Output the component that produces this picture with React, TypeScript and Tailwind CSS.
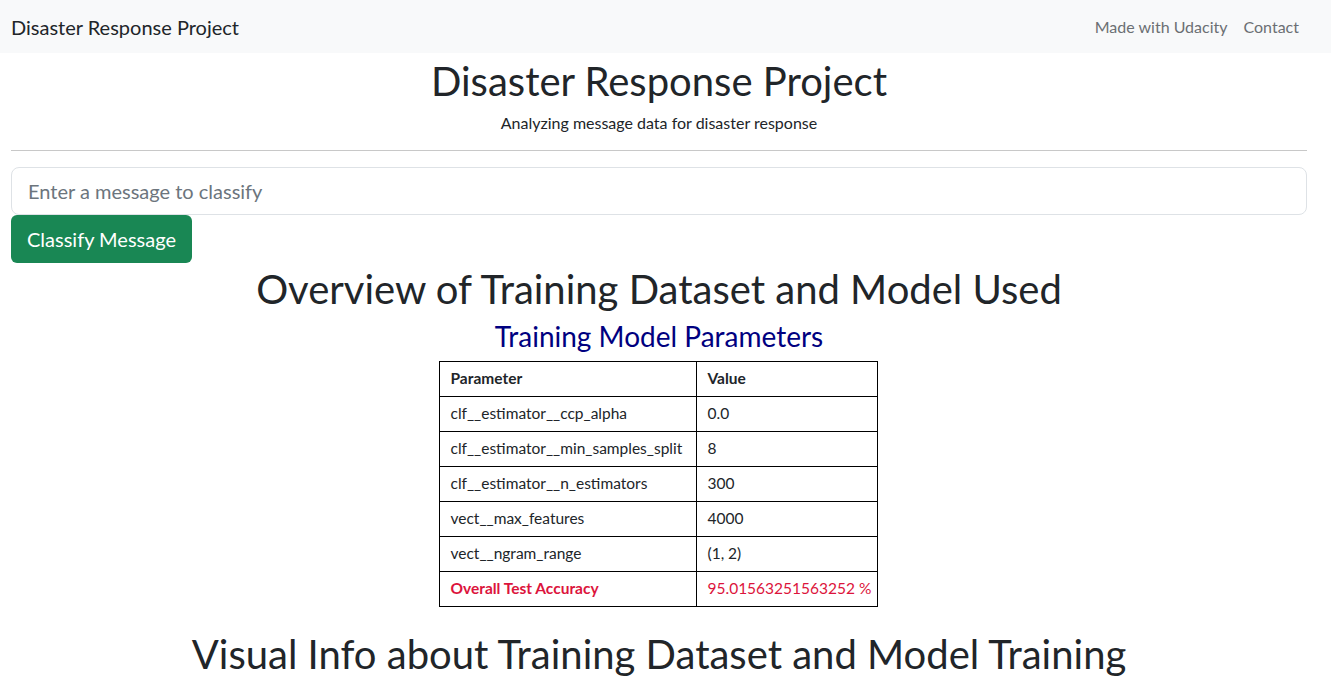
import React from "react";

const rows: [string, string][] = [
  ["clf__estimator__ccp_alpha", "0.0"],
  ["clf__estimator__min_samples_split", "8"],
  ["clf__estimator__n_estimators", "300"],
  ["vect__max_features", "4000"],
  ["vect__ngram_range", "(1, 2)"],
];

export default function App() {
  return (
    <div className="min-h-screen bg-white text-[#212529] font-['Lato','Noto_Sans',sans-serif]">
      {/* Navbar */}
      <nav className="h-[53px] bg-[#f8f9fa] flex items-center justify-between pl-[11px] pr-[32px]">
        <span className="text-[20px]">Disaster Response Project</span>
        <div className="flex items-center gap-[16px] text-[16px] text-[#6b6f73]">
          <span>Made with Udacity</span>
          <span>Contact</span>
        </div>
      </nav>

      <div className="ml-[11px] mr-[24px]">
        {/* Jumbotron */}
        <div className="text-center pt-[4px]">
          <h1 className="text-[40px] leading-[48px]">Disaster Response Project</h1>
          <p className="text-[16px] leading-[24px] mt-[6px]">Analyzing message data for disaster response</p>
        </div>
        <hr className="mt-[15px] border-t border-[#c8c8c8]" />

        {/* Form */}
        <div className="mt-[16px]">
          <input
            className="w-full h-[48px] px-[16px] text-[20px] border border-[#dee2e6] rounded-[8px] placeholder:text-[#6c757d] outline-none"
            placeholder="Enter a message to classify"
          />
          <button className="h-[48px] px-[16px] text-[20px] text-white bg-[#198754] rounded-[6px]">
            Classify Message
          </button>
        </div>

        {/* Overview */}
        <h1 className="text-center text-[40px] leading-[48px] mt-[2px]">
          Overview of Training Dataset and Model Used
        </h1>
        <h3 className="text-center text-[28px] leading-[34px] text-[#000080] mt-[6px]">
          Training Model Parameters
        </h3>
        <div className="flex justify-center mt-[8px]">
          <table className="border-collapse table-fixed text-[15.5px] ml-[-2px] w-[438px]">
            <thead>
              <tr className="h-[35px]">
                <th className="border border-black text-left font-bold px-[11px] w-[257px]">Parameter</th>
                <th className="border border-black text-left font-bold px-[11px] w-[181px]">Value</th>
              </tr>
            </thead>
            <tbody>
              {rows.map(([k, v]) => (
                <tr key={k} className="h-[35px]">
                  <td className="border border-black px-[11px] whitespace-nowrap">{k}</td>
                  <td className="border border-black px-[11px] whitespace-nowrap">{v}</td>
                </tr>
              ))}
              <tr className="h-[35px] text-[#dc143c]">
                <td className="border border-black px-[11px] font-bold whitespace-nowrap">Overall Test Accuracy</td>
                <td className="border border-black px-[11px] whitespace-nowrap">95.01563251563252 %</td>
              </tr>
            </tbody>
          </table>
        </div>

        <h1 className="text-center text-[40px] leading-[48px] mt-[23px]">
          Visual Info about Training Dataset and Model Training
        </h1>
      </div>
    </div>
  );
}
